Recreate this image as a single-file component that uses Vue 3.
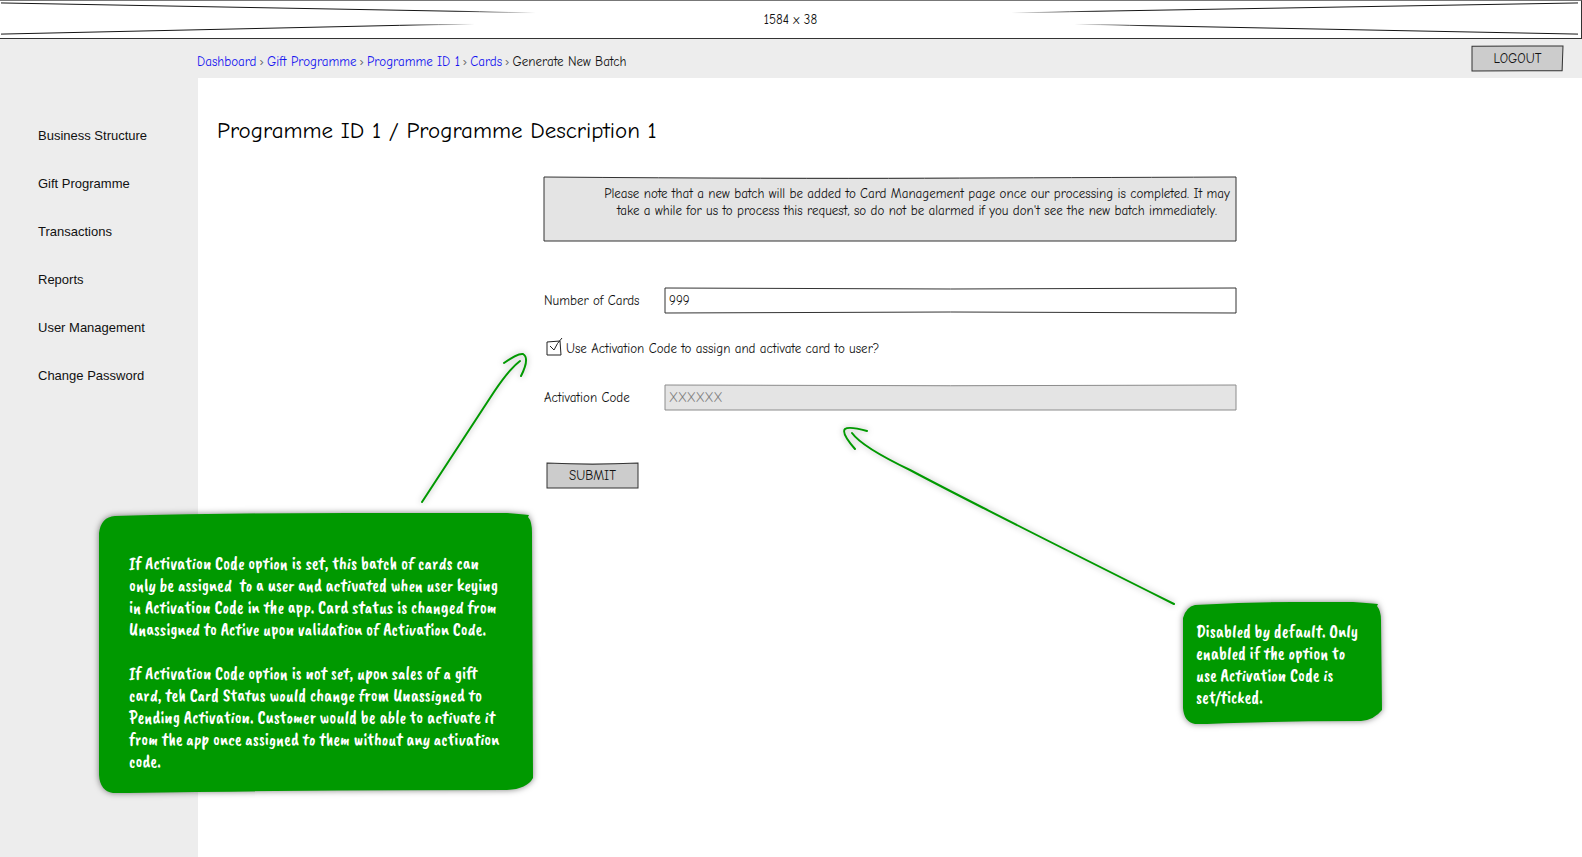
<script setup>
import { ref } from 'vue'

const crumbs = ['Dashboard', 'Gift Programme', 'Programme ID 1', 'Cards']
const menu = ['Business Structure', 'Gift Programme', 'Transactions', 'Reports', 'User Management', 'Change Password']
const cards = ref('999')
const useCode = ref(true)
const code = ref('XXXXXX')

const codeNotes = [
  [
    'If Activation Code option is set, this batch of cards can',
    'only be assigned  to a user and activated when user keying',
    'in Activation Code in the app. Card status is changed from',
    'Unassigned to Active upon validation of Activation Code.',
  ].join('\n'),
  [
    'If Activation Code option is not set, upon sales of a gift',
    'card, teh Card Status would change from Unassigned to',
    'Pending Activation. Customer would be able to activate it',
    'from the app once assigned to them without any activation',
    'code.',
  ].join('\n'),
]
const fieldNote = [
  'Disabled by default. Only',
  'enabled if the option to',
  'use Activation Code is',
  'set/ticked.',
].join('\n')
</script>

<template>
  <div class="page">
    <header class="banner">
      <svg class="cross" viewBox="0 0 1582 38" preserveAspectRatio="none" aria-hidden="true">
        <defs>
          <linearGradient id="fadeRight"><stop offset="0.85" stop-color="#111" /><stop offset="1" stop-color="#111" stop-opacity="0" /></linearGradient>
          <linearGradient id="fadeLeft"><stop offset="0" stop-color="#111" stop-opacity="0" /><stop offset="0.15" stop-color="#111" /></linearGradient>
        </defs>
        <path d="M1 2 L480 11 Q510 12 536 12" stroke="url(#fadeRight)" />
        <path d="M1 34 L400 25 Q440 24 475 24" stroke="url(#fadeRight)" />
        <path d="M1579 2 L1070 11 Q1040 12 1012 12" stroke="url(#fadeLeft)" />
        <path d="M1579 34 L1130 25 Q1100 24 1075 24" stroke="url(#fadeLeft)" />
      </svg>
      <span>1584 x 38</span>
    </header>

    <div class="topbar">
      <nav class="crumbs" aria-label="Breadcrumb">
        <template v-for="c in crumbs" :key="c"><a href="#">{{ c }}</a><i>›</i></template><span>Generate New Batch</span>
      </nav>
      <button class="btn" type="button">
        <svg class="frame" viewBox="0 0 100 100" preserveAspectRatio="none" aria-hidden="true"><path d="M0 1 L100 0 L99 99 L0 100 Z" /></svg>
        <span>LOGOUT</span>
      </button>
    </div>

    <div class="body">
      <nav class="side" aria-label="Main">
        <a v-for="m in menu" :key="m" href="#">{{ m }}</a>
      </nav>

      <main class="main">
        <h1>Programme ID 1 / Programme Description 1</h1>

        <form class="form" @submit.prevent>
          <div class="notice">
            <svg class="frame" viewBox="0 0 100 100" preserveAspectRatio="none" aria-hidden="true"><path d="M0 0 Q35 3 55 2 T100 0 L100 100 L0 100 Z" /></svg>
            <p>Please note that a new batch will be added to Card Management page once our processing is completed. It may<br>take a while for us to process this request, so do not be alarmed if you don't see the new batch immediately.</p>
          </div>

          <div class="row">
            <label for="cards">Number of Cards</label>
            <div class="field">
              <svg class="frame" viewBox="0 0 100 100" preserveAspectRatio="none" aria-hidden="true"><path d="M0 0 Q50 8 100 0 L100 100 Q50 92 0 100 Z" /></svg>
              <input id="cards" v-model="cards" type="text">
            </div>
          </div>

          <div class="check">
            <span class="box">
              <input id="use" v-model="useCode" type="checkbox">
              <svg viewBox="0 0 16 18" aria-hidden="true">
                <path d="M1 3 L14 2 L15 16 L1 16 Z" />
                <path v-if="useCode" d="M4 7 L8 11 Q11 4 16 -1" />
              </svg>
            </span>
            <label for="use">Use Activation Code to assign and activate card to user?</label>
          </div>

          <div class="row">
            <label for="code">Activation Code</label>
            <div class="field off">
              <svg class="frame" viewBox="0 0 100 100" preserveAspectRatio="none" aria-hidden="true"><path d="M0 0 Q50 6 100 0 L100 100 L0 100 Z" /></svg>
              <input id="code" v-model="code" type="text" disabled>
            </div>
          </div>

          <button class="btn submit" type="submit">
            <svg class="frame" viewBox="0 0 100 100" preserveAspectRatio="none" aria-hidden="true"><path d="M0 0 Q50 9 100 0 L100 100 L0 100 Z" /></svg>
            <span>SUBMIT</span>
          </button>
        </form>
      </main>
    </div>

    <svg class="arrow arrow-code" viewBox="0 0 120 160" aria-hidden="true">
      <path d="M12 152 L80 48 Q98 20 110 11" />
      <path d="M94 13 Q108 3 113 4 Q120 8 111 26" />
    </svg>
    <svg class="arrow arrow-field" viewBox="0 0 350 190" aria-hidden="true">
      <path d="M334 179 Q130 77 70 45 Q22 22 12 8" />
      <path d="M27 6 Q9 1 5 4 Q1 8 15 24" />
    </svg>

    <aside class="note note-code">
      <svg viewBox="0 0 434 280" preserveAspectRatio="none" aria-hidden="true"><path d="M0 20 Q2 4 16 3 Q120 0 250 0 L408 0 Q420 1 430 2 L429 4 Q433 8 433 20 L434 265 Q428 276 408 277 Q200 277 30 280 L14 280 Q1 278 0 262 Z" /></svg>
      <p v-for="n in codeNotes" :key="n">{{ n }}</p>
    </aside>
    <aside class="note note-field">
      <svg viewBox="0 0 199 122" preserveAspectRatio="none" aria-hidden="true"><path d="M0 16 Q3 5 12 3 Q60 0 110 0 L170 0 Q184 1 195 2 L194 4 Q198 9 198 18 L199 108 Q191 118 178 119 Q90 119 24 122 L12 122 Q1 120 0 106 Z" /></svg>
      <p>{{ fieldNote }}</p>
    </aside>
  </div>
</template>

<style>
body { margin: 0; }
</style>

<style scoped>
.page {
  position: relative;
  display: flex;
  flex-direction: column;
  min-height: 100vh;
  background: #fff;
  color: #111;
  font: 13px/17px "Comic Neue", "Comic Sans MS", Lato, sans-serif;
}
.page * { box-sizing: border-box; }
h1, p { margin: 0; font-weight: 400; }
a { text-decoration: none; }
button, input { font: inherit; color: inherit; margin: 0; padding: 0; border: 0; background: none; }

.banner {
  position: relative;
  display: flex;
  align-items: center;
  justify-content: center;
  height: 39px;
  border: 1px solid #333;
  border-top-color: #777;
  border-left: 0;
}
.cross { position: absolute; inset: 0; width: 100%; height: 100%; fill: none; }

.topbar {
  display: flex;
  align-items: center;
  justify-content: space-between;
  height: 39px;
  padding: 0 19px 0 197px;
  background: #ededed;
}
.crumbs { display: flex; margin-top: 6px; gap: 3px; white-space: nowrap; }
.crumbs a { color: #1414f0; }
.crumbs i { font-style: normal; color: #666; }

.btn {
  position: relative;
  width: 91px;
  height: 25px;
  background: #ccc;
  cursor: pointer;
}
.btn span { position: relative; }
.frame {
  position: absolute;
  inset: 0;
  width: 100%;
  height: 100%;
  overflow: visible;
  fill: none;
  stroke: #333;
  pointer-events: none;
}
.frame path { vector-effect: non-scaling-stroke; }

.body { display: flex; flex: 1; }
.side {
  flex: 0 0 198px;
  padding: 34px 0 0 38px;
  background: #ededed;
  font-family: "Liberation Sans", Arial, sans-serif;
}
.side a { display: block; line-height: 48px; color: #111; }
.main { flex: 1; min-width: 0; padding-top: 35px; }
h1 { padding-left: 19px; font-size: 23px; line-height: 36px; color: #000; }

.form {
  display: flex;
  flex-direction: column;
  width: 50%;
  margin: 28px 0 0 25%;
}
.notice {
  position: relative;
  height: 64px;
  padding: 8px 4px 0 58px;
  background: #e4e4e4;
  text-align: center;
  white-space: nowrap;
}
.row { display: flex; align-items: center; }
.row label { flex: 0 0 121px; }
.notice + .row { margin-top: 47px; }
.field { position: relative; flex: 1; height: 25px; }
.field input { position: relative; display: block; width: 100%; height: 100%; padding: 0 4px; }
.field.off { background: #e4e4e4; color: #808080; }
.off .frame { stroke: #8c8c8c; }
.check { display: flex; align-items: center; gap: 4px; height: 18px; margin: 26px 0 28px 2px; }
.box { position: relative; width: 16px; height: 18px; }
.box input { appearance: none; display: block; width: 16px; height: 18px; }
.box svg { position: absolute; inset: 0; width: 16px; height: 18px; overflow: visible; fill: none; stroke: #222; pointer-events: none; }
.submit { margin: 53px 0 0 3px; }

.arrow {
  position: absolute;
  fill: none;
  stroke: #090;
  stroke-width: 2;
  stroke-linecap: round;
  filter: drop-shadow(0 0 3px rgba(0, 0, 0, 0.35));
  pointer-events: none;
}
.arrow-code { left: 410px; top: 350px; width: 120px; height: 160px; }
.arrow-field { left: 840px; top: 425px; width: 350px; height: 190px; }

.note {
  position: absolute;
  color: #fff;
  font: 700 18px/22px "Caveat Brush", Lato, sans-serif;
  white-space: pre;
}
.note svg {
  position: absolute;
  inset: 0;
  width: 100%;
  height: 100%;
  overflow: visible;
  fill: #090;
  filter: drop-shadow(0 0 3px rgba(0, 0, 0, 0.5));
}
.note p { position: relative; }
.note p + p { margin-top: 22px; }
.note-code { left: 99px; top: 513px; width: 434px; padding: 39px 30px 21px; }
.note-field { left: 1183px; top: 602px; width: 199px; padding: 18px 13px 16px; }
</style>
